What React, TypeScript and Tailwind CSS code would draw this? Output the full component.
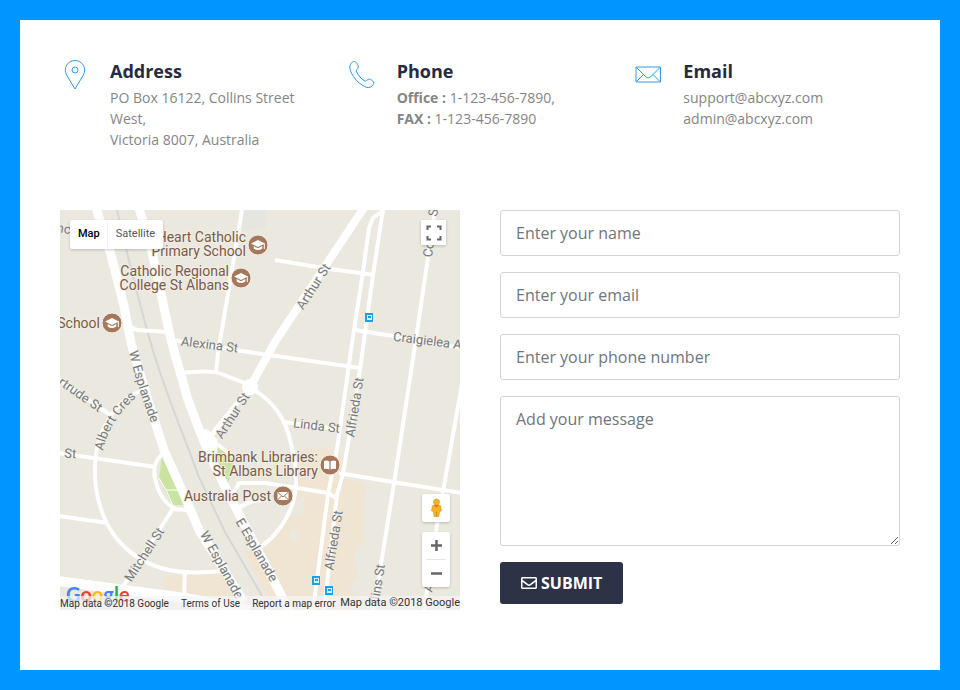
import type { ReactNode } from "react";
import { FaRegEnvelope } from "react-icons/fa";

const BROWN = "#7b5a47";
const LAND = "#eae8df";
const HALO = "#f1efe8";

function InfoBlock({ icon, title, children }: { icon: ReactNode; title: string; children: ReactNode }) {
  return (
    <section className="flex gap-5 pr-[30px]">
      <div className="w-[30px] shrink-0">{icon}</div>
      <div>
        <h2 className="text-lg leading-[22px] font-bold text-[#262b3e]">{title}</h2>
        <div className="mt-[5px] text-sm leading-[21px] text-[#858585]">{children}</div>
      </div>
    </section>
  );
}

const iconClass = "block h-[30px] w-[30px] fill-none stroke-[#3498e8]";

function PinIcon() {
  return (
    <svg viewBox="0 0 30 30" className={iconClass} aria-hidden="true">
      <path d="M15 29 L6.800 15.300 C2.500 8 8 .5 15 .5 S27.500 8 23.200 15.300 Z" />
      <circle cx="15" cy="10" r="3" />
    </svg>
  );
}

function PhoneIcon() {
  return (
    <svg viewBox="0 0 30 30" className={iconClass} aria-hidden="true">
      <path d="M4.200 3.200 C6 1.300 8.300 .9 9.700 3 C10.800 4.800 12.100 6.500 10.800 8.400 C9.800 9.700 8.600 10.200 9.600 12 C11.700 15.800 14 18.700 17.300 20.700 C19 21.700 19.700 20.200 21 19.400 C22.600 18.400 24.200 19.700 25.700 20.900 C27.400 22.200 26.900 24.300 25.200 25.900 C23.400 27.700 20.600 28.200 17.500 26.500 C11 23 6.600 18.200 3.900 11.800 C2.500 8.500 2.400 5.200 4.200 3.200 Z" />
    </svg>
  );
}

function MailIcon() {
  return (
    <svg viewBox="0 0 30 30" className={iconClass} aria-hidden="true">
      <path d="M3 7 H27.500 V22 H3 Z M3.500 7.500 L13 17 Q15.200 19 17.500 17 L27 7.500 M3.500 21.500 L10.500 14.500 M27 21.500 L20 14.500" />
    </svg>
  );
}

type Street = { text: string; x: number; y: number; turn: number };

const streets: Street[] = [
  { text: "Alexina St", x: 149, y: 139, turn: 7 },
  { text: "Arthur St", x: 257, y: 79, turn: -57 },
  { text: "Arthur St", x: 176, y: 208, turn: -57 },
  { text: "rtrude St", x: 18, y: 188, turn: 35 },
  { text: "St", x: 10, y: 248, turn: 4 },
  { text: "Mitchell St", x: 88, y: 347, turn: -57 },
  { text: "W Esplanade", x: 158, y: 357, turn: 61 },
  { text: "E Esplanade", x: 193, y: 342, turn: 60 },
  { text: "Linda St", x: 256, y: 220, turn: 7 },
  { text: "Alfrieda St", x: 299, y: 198, turn: -81 },
  { text: "Alfrieda St", x: 278, y: 331, turn: -81 },
  { text: "Craigielea A", x: 367, y: 135, turn: 7 },
  { text: "Co", x: 373, y: 40, turn: -81 },
  { text: "St", x: 378, y: 1, turn: -81 },
  { text: "llins St", x: 322, y: 374, turn: -81 },
  { text: "A", x: 373, y: 379, turn: -75 },
  { text: "nc", x: 3, y: 23, turn: 10 },
];

type Place = { lines: string[]; x: number; y: number; cx: number; cy: number; kind: "school" | "book" | "post" };

const places: Place[] = [
  { lines: ["Heart Catholic", "Primary School"], x: 186, y: 32, cx: 198, cy: 35, kind: "school" },
  { lines: ["Catholic Regional", "College St Albans"], x: 169, y: 66, cx: 181, cy: 68, kind: "school" },
  { lines: ["School"], x: 40, y: 118, cx: 52, cy: 113, kind: "school" },
  { lines: ["Brimbank Libraries:", "St Albans Library"], x: 258, y: 252, cx: 270, cy: 255, kind: "book" },
  { lines: ["Australia Post"], x: 211, y: 291, cx: 223, cy: 286, kind: "post" },
];

const glyphs = {
  school: (
    <g>
      <path d="M-7 -1.500 L0 -5 L7 -1.500 L0 2 Z M-4.300 1 V3.500 Q0 6.500 4.300 3.500 V1 L0 3.300 Z" fill="#fff" />
      <path d="M6.300 -1.500 V4" stroke="#fff" />
    </g>
  ),
  book: (
    <path d="M-6 -4 Q-3 -5 -.6 -3.500 V4.500 Q-3 3.200 -6 4 Z M6 -4 Q3 -5 .6 -3.500 V4.500 Q3 3.200 6 4 Z" fill="#fff" />
  ),
  post: (
    <g>
      <path d="M-5.500 -4 H5.500 V4 H-5.500 Z" fill="#fff" />
      <path d="M-5.500 -4 L0 1 L5.500 -4 M-5.500 4 L-1.500 0 M5.500 4 L1.500 0" fill="none" stroke="#a5775b" />
    </g>
  ),
};

function MapDrawing() {
  return (
    <svg
      viewBox="0 0 400 400"
      preserveAspectRatio="xMidYMid slice"
      className="block h-full w-full font-[Roboto,sans-serif]"
      role="img"
      aria-label="Street map of St Albans, Victoria"
    >
      <rect width="400" height="400" fill={LAND} />
      <path d="M184 0 H206 V18 L182 20 Z" fill="#e5e6e0" />
      <g fill="#f0e4d3">
        <path d="M236 242 L262 236 L287 250 L285 268 L306 275 L303 300 L305 330 L293 345 L298 366 L290 374 L300 400 H216 L182 342 L203 336 L222 318 L233 294 L236 275 Z" />
        <path d="M104 366 L162 364 L176 392 L125 385 L103 377 Z" />
      </g>
      <path d="M236 290 L244 286 V302 L230 307 Z M230 318 L238 322 V331 L229 329 Z M285 250 L294 244 L296 268 L284 266 Z" fill={LAND} />
      <path d="M102 246 L125 295 L112 295 L99 268 Z" fill="#cbe3a2" />
      <path d="M158 232 L174 250 L172 264 L166 276 L157 258 Z" fill="#cbe3a2" />
      <path d="M57 0 C68 48 77 85 91 134 S126 230 138 265 L165 322 L202 386" fill="none" stroke="#d6d6d5" strokeWidth="2" />
      <g fill="none" stroke="#fff" strokeLinejoin="round">
        <g strokeWidth="4">
          <path d="M182 0 L158 143 L156 162" />
          <path d="M67 110 Q70 118 77 120 L107 122" />
          <path d="M122 163 Q148 160 159 163 L190 175" />
          <path d="M112 130 L195 143 L300 158" />
          <path d="M215 50 L270 59 L315 65" />
          <path d="M324 0 L313 8 L309 18 L303 62 L292 133 L278 233 L268 285 L253 400" />
          <path d="M323 0 L313 65 L300 160 L283 264 L277 285 L264 400" />
          <path d="M375 0 L357 122 L335 267 L322 348 L313 400" />
          <path d="M403 168 L385 270 L377 315 L364 400" />
          <path d="M295 120 L333 126 L402 138" />
          <path d="M279 263 L333 272 L402 283" />
          <path d="M172 286 L179 273 L205 273 L232 277 L268 283 L276 288" />
          <path d="M179 298 Q192 289 207 290" />
          <path d="M194 180 C216 193 227 214 231 234 C237 257 238 281 231 298 Q222 321 201 337" />
          <path d="M222 212 L278 219" />
          <path d="M80 181 Q57 193 49 209 C35 231 33 255 36 278 C42 320 66 347 101 358 Q125 365 162 361" />
          <path d="M-2 169 L52 206" />
          <path d="M-2 243 L96 257" />
          <path d="M103 244 Q92 252 95 268 Q99 290 115 299 L128 300" />
          <path d="M-2 306 L48 313" />
          <path d="M114 297 L62 378" />
          <path d="M125 362 L124 386" />
          <path d="M145 225 L174 247" />
        </g>
        <path d="M106 280 H119 M99 268 L106 280 L116 302" strokeWidth="1" />
        <path d="M-2 371 L125 388 L190 400" strokeWidth="10" />
        <path d="M36 -2 L51 45 L64 96 L71 133 L87 187 L104 240 L122 280 L139 320 L184 392" strokeWidth="9" />
        <path d="M79 -2 L92 42 L111 130 L128 190 L142 227 L160 267 L178 302 L230 402" strokeWidth="9" />
        <path d="M305 -4 L215 132 L190 177" strokeWidth="8" />
        <path d="M190 177 L146 232" strokeWidth="5" />
      </g>
      <circle cx="190" cy="177" r="8" fill="#fff" />
      <path d="M137 220 L147 221 L156 230 L155 250 L148 242 Z" fill="#fff" stroke="#fff" strokeWidth="3" strokeLinejoin="round" />

      {[[309, 107], [256, 370], [269, 380]].map(([x, y]) => (
        <g key={`${x}-${y}`} transform={`translate(${x} ${y})`}>
          <rect x="-4" y="-4" width="8" height="9" fill="#1da1e2" />
          <rect x="-2" y="-2" width="5" height="5" fill="#d9f0fb" />
          <rect x="-1" y="-1" width="3" height="2" fill="#1da1e2" />
        </g>
      ))}

      <defs>
        <path id="w-esplanade" d="M69 142 Q77 179 98 230" />
        <path id="albert-cres" d="M43 241 Q50 207 83 182" />
      </defs>
      <g fontSize="13" fill="#777a7d" stroke={HALO} strokeWidth="1" paintOrder="stroke" strokeLinejoin="round">
        <text>
          <textPath href="#w-esplanade">W Esplanade</textPath>
        </text>
        <text>
          <textPath href="#albert-cres">Albert Cres</textPath>
        </text>
        {streets.map((s, i) => (
          <text key={i} textAnchor="middle" transform={`translate(${s.x} ${s.y}) rotate(${s.turn})`}>
            {s.text}
          </text>
        ))}
      </g>

      {places.map((p) => (
        <g key={p.lines[0]}>
          <g fontSize="14" fill={BROWN} textAnchor="end" stroke={HALO} strokeWidth="2" paintOrder="stroke" strokeLinejoin="round">
            {p.lines.map((line, i) => (
              <text key={line} x={p.x} y={p.y + i * 14}>
                {line}
              </text>
            ))}
          </g>
          <g transform={`translate(${p.cx} ${p.cy})`}>
            <circle r="10" fill="#a5775b" stroke={HALO} />
            {glyphs[p.kind]}
          </g>
        </g>
      ))}

      <text x="6" y="392" fontSize="20" className="font-[Lato,sans-serif] font-bold">
        <tspan fill="#4285f4">G</tspan>
        <tspan fill="#ea4335">o</tspan>
        <tspan fill="#fbbc05">o</tspan>
        <tspan fill="#4285f4">g</tspan>
        <tspan fill="#34a853">l</tspan>
        <tspan fill="#ea4335">e</tspan>
      </text>
    </svg>
  );
}

function MapPanel() {
  const box = "bg-white shadow-[0_1px_3px_rgba(0,0,0,0.2)]";
  return (
    <div className="relative h-[400px] overflow-hidden font-[Roboto,sans-serif]">
      <MapDrawing />
      <div className={`absolute top-[10px] left-[10px] flex h-[29px] rounded-xs text-[11px] ${box}`}>
        <button type="button" className="border-r border-gray-100 pr-[7px] pl-2 font-medium text-black">Map</button>
        <button type="button" className="px-2 text-[#565656]">Satellite</button>
      </div>
      <button type="button" aria-label="Toggle fullscreen" className={`absolute top-[10px] right-[14px] flex size-[25px] items-center justify-center ${box}`}>
        <svg viewBox="0 0 16 16" className="size-4 fill-none stroke-[#666]" strokeWidth="2">
          <path d="M1.500 5 V1.500 H5 M11 1.500 H14.500 V5 M14.500 11 V14.500 H11 M5 14.500 H1.500 V11" />
        </svg>
      </button>
      <div className="absolute right-[10px] bottom-[23px] flex w-7 flex-col gap-[10px]">
        <button type="button" aria-label="Street View" className={`flex h-7 items-center justify-center rounded-xs ${box}`}>
          <svg viewBox="0 0 14 22" className="h-5 w-[13px]">
            <path d="M2.500 8.500 Q7 6 11.500 8.500 L12.500 14 L10.500 15 L9.500 20.500 H4.500 L3.500 15 L1.500 14 Z" fill="#f5b324" stroke="#d38e1c" strokeWidth=".6" />
            <circle cx="7" cy="4.500" r="3.400" fill="#f5b324" stroke="#d38e1c" strokeWidth=".6" />
            <path d="M4.500 8 H9.500 L7 10.500 Z" fill="#dc6b20" />
            <path d="M7 15 V20" stroke="#d38e1c" />
          </svg>
        </button>
        <div className={`flex flex-col rounded-xs ${box}`}>
          <button type="button" aria-label="Zoom in" className="flex h-[27px] items-center justify-center">
            <svg viewBox="0 0 11 11" className="size-[11px] stroke-[#666]" strokeWidth="2.500"><path d="M0 5.500 H11 M5.500 0 V11" /></svg>
          </button>
          <div className="mx-1 h-px bg-[#e6e6e6]" />
          <button type="button" aria-label="Zoom out" className="flex h-[27px] items-center justify-center">
            <svg viewBox="0 0 11 11" className="size-[11px] stroke-[#666]" strokeWidth="2.500"><path d="M0 5.500 H11" /></svg>
          </button>
        </div>
      </div>
      <div className="absolute inset-x-0 bottom-0 flex h-[14px] items-center justify-between bg-[#f5f5f5]/70 text-[10px] whitespace-nowrap text-[#333]">
        <div className="flex gap-3">
          <span>Map data ©2018 Google</span>
          <a href="#terms">Terms of Use</a>
          <a href="#report">Report a map error</a>
        </div>
        <span className="text-[11px]">Map data ©2018 Google</span>
      </div>
    </div>
  );
}

const field =
  "block w-full rounded-[3px] border border-[#d3d6d8] bg-white px-[15px] text-base leading-6 text-[#495057] placeholder:text-[#6f767c] placeholder:opacity-100";

export default function App() {
  return (
    <div className="min-h-screen bg-[#0095ff] p-5 font-['Open_Sans',sans-serif]">
      <main className="min-h-[650px] bg-white p-10">
        <div className="-mr-5 grid grid-cols-3">
          <InfoBlock icon={<PinIcon />} title="Address">
            <p>PO Box 16122, Collins Street West,</p>
            <p>Victoria 8007, Australia</p>
          </InfoBlock>
          <InfoBlock icon={<PhoneIcon />} title="Phone">
            <p><strong>Office :</strong> 1-123-456-7890,</p>
            <p><strong>FAX :</strong> 1-123-456-7890</p>
          </InfoBlock>
          <InfoBlock icon={<MailIcon />} title="Email">
            <p><a href="mailto:support@abcxyz.com">support@abcxyz.com</a></p>
            <p><a href="mailto:admin@abcxyz.com">admin@abcxyz.com</a></p>
          </InfoBlock>
        </div>
        <div className="mt-[60px] grid grid-cols-2 gap-10">
          <MapPanel />
          <form className="flex flex-col items-start gap-4" onSubmit={(e) => e.preventDefault()}>
            <input aria-label="Your name" type="text" placeholder="Enter your name" className={`h-[46px] ${field}`} />
            <input aria-label="Your email" type="email" placeholder="Enter your email" className={`h-[46px] ${field}`} />
            <input aria-label="Your phone number" type="tel" placeholder="Enter your phone number" className={`h-[46px] ${field}`} />
            <textarea aria-label="Your message" placeholder="Add your message" className={`h-[150px] resize-y py-[10px] ${field}`} />
            <button type="submit" className="flex h-[42px] items-center gap-1 rounded-[3px] bg-[#2d3246] px-[21px] text-base font-bold text-white">
              <FaRegEnvelope aria-hidden="true" /> SUBMIT
            </button>
          </form>
        </div>
      </main>
    </div>
  );
}
